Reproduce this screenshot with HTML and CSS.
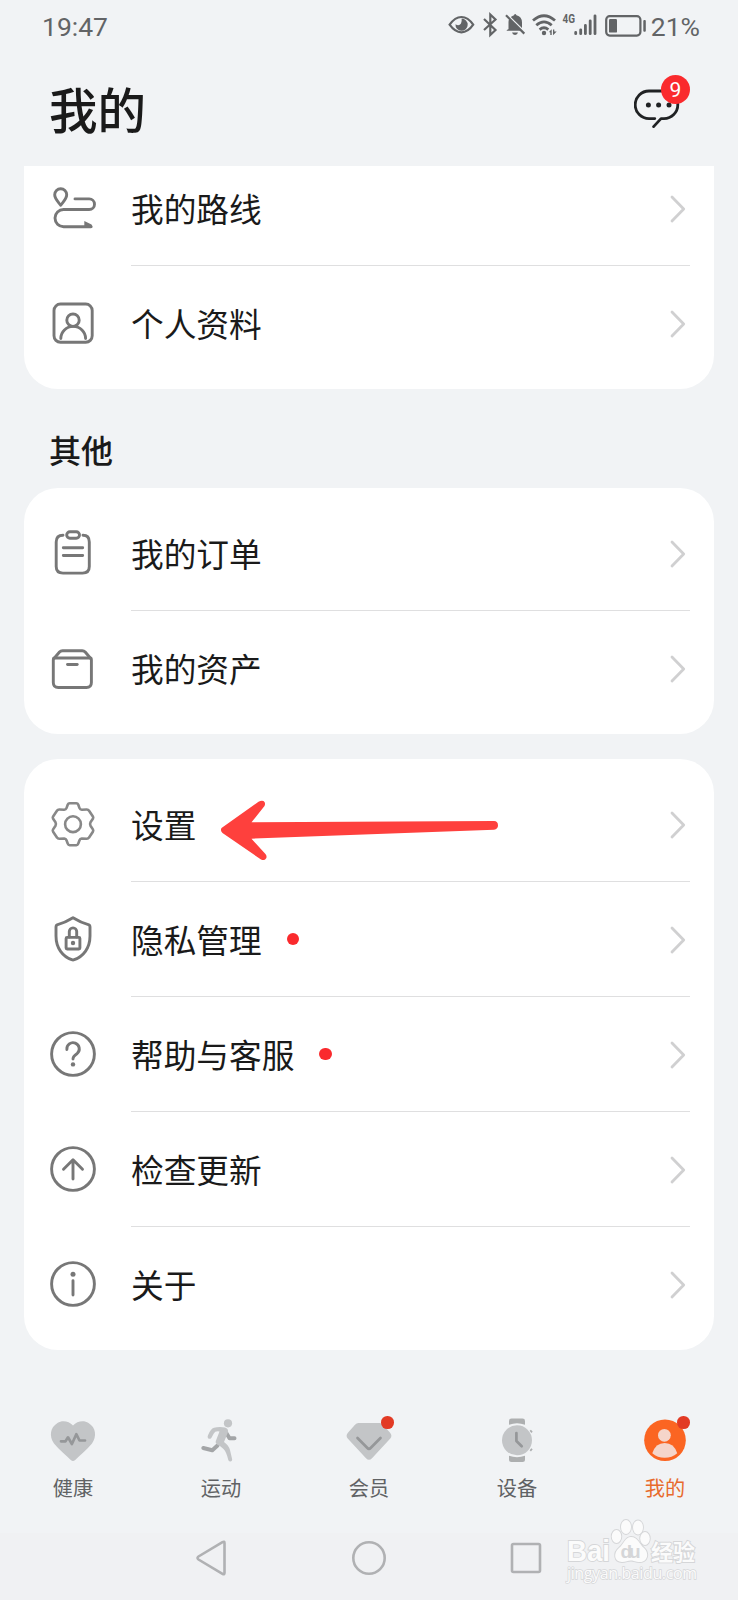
FILE: index.html
```
<!DOCTYPE html>
<html lang="zh-CN">
<head>
	<meta charset="utf-8">
	<link rel="stylesheet" href="styles.css">
	<title>我的</title>
</head>
<body>
	<svg class="defs">
		<symbol id="chevron" viewBox="0 0 16 28"><path d="M2 2 L13.7 14 L2 26"/></symbol>
	</svg>

	<div class="status">
		<span>19:47</span>
		<div class="status-right">
			<svg class="status-icons" viewBox="0 0 204 30">
				<!-- eye -->
				<path class="line" d="M3.6 14.7 Q9 7 15.4 7 Q22 7 27.2 14.7 Q22 22.3 15.4 22.3 Q9 22.3 3.6 14.7 Z"/>
				<path d="M15.6 8.6 A6.1 6.1 0 1 1 9.5 14.2 Q13 16.5 15 13.5 Q16 11 15.6 8.6 Z"/>
				<!-- bluetooth -->
				<path class="line" d="M38 9 L49.5 20 L44.3 25 V4.5 L49.5 9.5 L38 20"/>
				<!-- bell off -->
				<path d="M62.5 20 L62.5 12 Q62.5 10 63.3 9 L75 20.8 H60.5 Q60.5 20 62.5 19 Z"/>
				<path d="M64.8 7 Q66.5 5.6 68 5.2 Q69 3 70.5 5.2 Q76 6.5 76 12.5 V18 Z"/>
				<path d="M66 22.6 H72 Q71.5 25 69 25 Q66.5 25 66 22.6 Z"/>
				<path class="line" d="M60 5.2 L78.3 23.6"/>
				<!-- wifi -->
				<path class="wifi" d="M87 10.5 Q98 1 109 10.5 M90.3 15.2 Q98 8.5 105.7 15.2 M93.6 19.6 Q98 16 102.3 19.6"/>
				<circle cx="98" cy="23" r="2.2"/>
				<path d="M103 22 L105.7 19.3 V25 H104.3 V22.6 Z M107 19.6 H108.3 V21.6 H110.7 L107 25.3 Z"/>
				<text x="116.5" y="13.3" textLength="12.5" lengthAdjust="spacingAndGlyphs">4G</text>
				<!-- signal -->
				<path class="bars" d="M129.7 22.5 V23.7 M134.7 19.8 V23.7 M139.4 15.5 V23.7 M144.2 10.8 V23.7 M149 5.8 V23.7"/>
				<!-- battery -->
				<rect class="line" x="160.2" y="6.2" width="34.2" height="19.4" rx="3.5"/>
				<rect x="163" y="9" width="8" height="13.6" rx="1.2"/>
				<rect x="197.3" y="10" width="2.5" height="11.8" rx="1"/>
			</svg>
			<span>21%</span>
		</div>
	</div>

	<div class="header">
		<h1>我的</h1>
		<div class="message">
			<svg viewBox="0 0 48 42">
				<path d="M20.8 30.6 H15 A13.8 13.8 0 0 1 15 3 H30 A13.8 13.8 0 0 1 30 30.6 H27 L19.6 38.6"/>
				<circle cx="14.4" cy="17" r="2.5"/><circle cx="24.6" cy="17" r="2.5"/><circle cx="35" cy="17" r="2.5"/>
			</svg>
			<span class="badge">9</span>
		</div>
	</div>

	<div class="card cut">
		<div class="row">
			<svg class="icon" viewBox="0 0 48 48">
				<path d="M11.7 21.3 C9.5 18 5.7 15 5.7 10.8 A6 6 0 0 1 17.7 10.8 C17.7 15 13.9 18 11.7 21.3 Z"/>
				<path d="M26 14.9 H40.2 A5.3 5.3 0 0 1 40.2 25.5 H14.6 A8.6 8.6 0 0 0 14.6 42.7 H42"/>
				<path class="solid" d="M35.3 37 L42.5 40.5 Q44.5 44 42 44 H35.3 Z"/>
			</svg>
			<div class="body"><span>我的路线</span><svg class="chevron"><use href="#chevron"/></svg></div>
		</div>
		<div class="row">
			<svg class="icon" viewBox="0 0 48 48">
				<rect x="5" y="5" width="38.2" height="38.3" rx="6.5"/>
				<circle cx="24" cy="21.2" r="6.2"/>
				<path d="M11.8 39.5 A12.3 12 0 0 1 36.6 39.5"/>
			</svg>
			<div class="body"><span>个人资料</span><svg class="chevron"><use href="#chevron"/></svg></div>
		</div>
	</div>

	<h2>其他</h2>

	<div class="card">
		<div class="row">
			<svg class="icon" viewBox="0 0 48 48">
				<path d="M14 6.2 Q7.2 6.2 7.2 13 V37.5 Q7.2 44.1 14 44.1 H33.5 Q40.3 44.1 40.3 37.5 V13 Q40.3 6.2 34 6.2"/>
				<rect x="17.7" y="2.8" width="12.8" height="6.4" rx="3.2"/>
				<path d="M14.3 18.8 H33.7 M14.3 26.5 H33.7"/>
			</svg>
			<div class="body"><span>我的订单</span><svg class="chevron"><use href="#chevron"/></svg></div>
		</div>
		<div class="row">
			<svg class="icon" viewBox="0 0 48 48">
				<path d="M4.3 16 Q4.3 14 5.5 14 H41.2 Q42.4 14 42.4 16 V38.5 Q42.4 43.5 37.4 43.5 H9.3 Q4.3 43.5 4.3 38.5 Z"/>
				<path d="M5.2 14.3 L10.5 8 Q11.7 6.7 13.5 6.7 H33.3 Q35 6.7 36.2 8 L41.5 14.3"/>
				<path d="M18.5 20.5 H28.2"/>
			</svg>
			<div class="body"><span>我的资产</span><svg class="chevron"><use href="#chevron"/></svg></div>
		</div>
	</div>

	<div class="card">
		<div class="row">
			<svg class="icon gear" viewBox="0 0 48 48">
				<path d="M20.600 3.300 H27.400 Q28.700 3.300 29.200 4.500 L30.500 8.100 Q31.100 9.700 32.800 9.800 L37.600 9.500 Q39.200 9.400 39.900 10.500 L43.900 16.400 Q44.600 17.600 43.900 18.800 L41.500 22.300 Q40.600 24 41.500 25.700 L43.900 29.400 Q44.600 30.600 43.900 31.700 L39.900 37.700 Q39.200 38.900 37.600 38.800 L32.800 38.500 Q31.100 38.700 30.500 40.300 L29.200 43.700 Q28.700 45.200 27.400 45.200 H20.600 Q19.300 45.200 18.800 43.700 L17.500 40.300 Q16.900 38.700 15.200 38.500 L10.400 38.800 Q8.800 38.900 8.100 37.700 L4.100 31.700 Q3.400 30.600 4.100 29.400 L6.500 25.700 Q7.400 24 6.500 22.300 L4.100 18.800 Q3.400 17.600 4.100 16.400 L8.100 10.500 Q8.800 9.400 10.400 9.500 L15.200 9.800 Q16.900 9.700 17.500 8.100 L18.800 4.500 Q19.300 3.300 20.600 3.300 Z"/>
				<circle cx="24" cy="24.200" r="7.900"/>
			</svg>
			<div class="body"><span>设置</span><svg class="chevron"><use href="#chevron"/></svg></div>
			<svg class="arrow" viewBox="0 0 280 62">
				<path d="M1.5 28 Q0 30.5 2.5 33 L41 59.5 Q44.5 61 46 58.5 Q47.5 56 45 53.5 L31.5 38.7 L274 29.800 Q278 29 278 25.500 Q278 21 274 21 L31.5 22.3 L44.5 6 Q46 2.5 43.5 1 Q41.5 0 38.5 1.7 Z"/>
			</svg>
		</div>
		<div class="row">
			<svg class="icon" viewBox="0 0 48 48">
				<path d="M24 2.8 C29.5 6.2 34.5 8.4 39.3 9.6 Q41 10.1 41 12 V21 C41 33.5 34 41.5 25.3 44.7 Q24 45.2 22.7 44.7 C14 41.5 7 33.5 7 21 V12 Q7 10.1 8.7 9.6 C13.5 8.4 18.5 6.2 24 2.8 Z"/>
				<rect x="17.1" y="22.4" width="13.8" height="11.6" rx="1"/>
				<path d="M20.3 22 V16.6 A3.7 3.7 0 0 1 27.7 16.6 V22"/>
				<circle class="solid" cx="24" cy="28" r="2.2"/>
			</svg>
			<div class="body"><span>隐私管理</span><i class="dot"></i><svg class="chevron"><use href="#chevron"/></svg></div>
		</div>
		<div class="row">
			<svg class="icon" viewBox="0 0 48 48">
				<circle cx="24" cy="24" r="21.4"/>
				<path d="M17.9 19.5 A6.2 6.2 0 1 1 28.2 23.5 C25.5 25.3 24 26.5 24 29"/>
				<circle class="solid" cx="24" cy="34.4" r="2.2"/>
			</svg>
			<div class="body"><span>帮助与客服</span><i class="dot"></i><svg class="chevron"><use href="#chevron"/></svg></div>
		</div>
		<div class="row">
			<svg class="icon" viewBox="0 0 48 48">
				<circle cx="24" cy="24" r="21.4"/>
				<path d="M24 34 V15 M14.5 24.3 L24 14.8 L33.5 24.3"/>
			</svg>
			<div class="body"><span>检查更新</span><svg class="chevron"><use href="#chevron"/></svg></div>
		</div>
		<div class="row">
			<svg class="icon" viewBox="0 0 48 48">
				<circle cx="24" cy="24" r="21.4"/>
				<path d="M24 20.8 V35"/>
				<circle class="solid" cx="24" cy="14.2" r="2.5"/>
			</svg>
			<div class="body"><span>关于</span><svg class="chevron"><use href="#chevron"/></svg></div>
		</div>
	</div>

	<div class="tabs">
		<div class="tab">
			<svg viewBox="0 0 48 48">
				<path class="light" d="M24 9.5 C28 5 35 4 39.5 7 C47 11.5 48 20.5 43 27.5 C38 34 31 39 26.2 44 Q24 46 21.8 44 C17 39 10 34 5 27.5 C0 20.5 1 11.5 8.5 7 C13 4 20 5 24 9.5 Z"/>
				<path class="dark-line" d="M12 25.3 H16.5 L19 21.3 L22.9 28 L27.3 18.2 L30.5 24.5 H36"/>
			</svg>
			<span>健康</span>
		</div>
		<div class="tab">
			<svg viewBox="0 0 48 48">
				<path class="dark-line limb" d="M20.5 29.5 L15.3 34.2 L6.3 32 M29 16.5 L32.5 22.2 L37.5 22.2"/>
				<circle class="light" cx="31" cy="7.3" r="4.1"/>
				<path class="light" d="M28 11.5 Q32.5 13 30.5 17.5 L27 26 Q31.5 29 33 34 L35.2 43.5 Q35 45.8 33 45.5 Q31.7 45.3 31.3 44 Q29.5 36 26.5 33 Q23 29.8 20.5 28.8 Q17.8 27 19 24.5 L22.5 15.5 Q18 14.8 16.8 17.5 L14.3 22 Q12.8 23.5 11.3 22.4 Q10 21 11 19.3 Q13.5 12.8 17 11.8 Q22 10.5 28 11.5 Z"/>
			</svg>
			<span>运动</span>
		</div>
		<div class="tab">
			<svg viewBox="0 0 48 48">
				<path class="light" d="M13.5 7 H34.5 Q36.5 7 38 8.8 L45.3 17 Q47.5 19.8 45.3 22.5 L27 42.2 Q24 45.5 21 42.2 L2.7 22.5 Q.5 19.8 2.7 17 L10 8.8 Q11.5 7 13.5 7 Z"/>
				<path class="dark-line" d="M12.5 22 L22.4 32 Q24 33.7 25.6 32 L35.5 22"/>
			</svg>
			<i class="dot"></i>
			<span>会员</span>
		</div>
		<div class="tab">
			<svg viewBox="0 0 48 48">
				<path class="mid" d="M16 8.8 V5 Q16 2.6 18.5 2.6 H29.5 Q32 2.6 32 5 V8.8 Q24 5.8 16 8.8 Z M16 39.8 V43.5 Q16 46 18.5 46 H29.5 Q32 46 32 43.5 V39.8 Q24 42.5 16 39.8 Z"/>
				<circle class="light" cx="24" cy="24.3" r="15"/>
				<path class="dark-line" d="M23.4 17 V25 L28.7 30.3"/>
				<path class="crown" d="M37.3 14.3 L39 16.4 M37.3 34.9 L39 32.8"/>
			</svg>
			<span>设备</span>
		</div>
		<div class="tab active">
			<svg viewBox="0 0 48 48">
				<circle class="face" cx="24" cy="24.3" r="20.8"/>
				<circle class="skin" cx="23.4" cy="19.3" r="6.4"/>
				<path class="skin" d="M11.3 37.3 Q14.5 27 23.7 27 Q33 27 36.2 37.3 Q31 41.8 23.7 41.8 Q16.5 41.8 11.3 37.3 Z"/>
			</svg>
			<i class="dot"></i>
			<span>我的</span>
		</div>
	</div>

	<div class="nav">
		<svg viewBox="0 0 36 36"><path d="M30.5 3 V33 Q30.5 35 28.5 33.8 L4.5 19.5 Q2.5 18 4.5 16.5 L28.5 2.2 Q30.5 1 30.5 3 Z"/></svg>
		<svg viewBox="0 0 36 36"><circle cx="18" cy="18" r="15.7"/></svg>
		<svg viewBox="0 0 36 36"><rect x="4" y="4" width="28" height="28" rx="1.5"/></svg>
	</div>

	<svg class="watermark" viewBox="0 0 140 66">
		<text class="bai" x="2" y="42.500" textLength="43" lengthAdjust="spacingAndGlyphs">Bai</text>
		<ellipse cx="51.5" cy="18.500" rx="4.8" ry="6.5"/><ellipse cx="61" cy="9" rx="5" ry="7"/><ellipse cx="73" cy="9.500" rx="5" ry="7"/><ellipse cx="80" cy="20.500" rx="4.8" ry="6.5"/>
		<path d="M66 19 C73 19 74 26 79 30 C85 36 82 44 75 44 C70 44 69 42.5 66 42.5 C63 42.5 61 44 57 44 C49 44 48 35 54 30 C59 26 60 19 66 19 Z"/>
		<text class="du" x="55.5" y="39.500" textLength="20">du</text>
		<text class="jy" x="86" y="41.500" textLength="44">经验</text>
		<text class="url" x="2" y="60.500" textLength="130">jingyan.baidu.com</text>
	</svg>
</body>
</html>
```
FILE: styles.css
```
body {
	position: relative;
	margin: 0;
	width: 738px;
	height: 1600px;
	overflow: hidden;
	background-color: #f1f3f5;
	color: #1a1a1a;
	font-family: "Noto Sans CJK SC", sans-serif
}

svg {
	display: block;
	flex: none
}

.defs {
	position: absolute;
	width: 0;
	height: 0
}

.status {
	display: flex;
	justify-content: space-between;
	height: 54px;
	padding: 0 38px 0 42px;
	color: #626466;
	font: 26.5px/54px Roboto, sans-serif
}

.status-right {
	display: flex
}

.status-icons {
	width: 204px;
	height: 30px;
	margin: 10px 1px 0 0;
	fill: #626466
}

.status-icons .line {
	fill: none;
	stroke: #626466;
	stroke-width: 2.2
}

.wifi {
	fill: none;
	stroke: #626466;
	stroke-width: 2.8
}

.bars {
	stroke: #626466;
	stroke-width: 2.8;
	stroke-linecap: round
}

.status-icons text {
	font: bold 13px Roboto, sans-serif
}

.header {
	display: flex;
	justify-content: space-between;
	height: 112px;
	padding: 0 48px 0 49px
}

h1 {
	margin: 0;
	font-size: 48.5px;
	font-weight: 500;
	line-height: 108px
}

.message {
	position: relative;
	width: 56px;
	padding-top: 34px
}

.message svg {
	width: 48px;
	height: 42px;
	fill: #202224
}

.message path {
	fill: none;
	stroke: #202224;
	stroke-width: 2.8;
	stroke-linecap: round;
	stroke-linejoin: round
}

.badge {
	position: absolute;
	top: 21px;
	right: 0;
	width: 29px;
	height: 29px;
	border-radius: 50%;
	background-color: #fa2a2d;
	color: #fff;
	font: 21px/30px Roboto, sans-serif;
	text-align: center
}

.card {
	margin: 0 24px 25px;
	padding: 8px 0;
	border-radius: 34px;
	background-color: #fff
}

.cut {
	margin-bottom: 0;
	padding-top: 0;
	border-radius: 0 0 34px 34px
}

.row {
	position: relative;
	display: flex;
	align-items: center;
	height: 115px;
	padding: 0 24px 0 25px
}

.cut .row:first-child {
	height: 100px
}

.cut .row:first-child .icon {
	margin-bottom: 16px
}

.cut .row:first-child .body {
	height: 85px;
	padding-bottom: 14px
}

.icon {
	width: 48px;
	height: 48px;
	margin: 0 34px 1px 0;
	fill: none;
	stroke: #777;
	stroke-width: 2.9;
	stroke-linecap: round;
	stroke-linejoin: round
}

.gear {
	stroke: #888;
	stroke-width: 2.6
}

.solid {
	fill: #777;
	stroke: none
}

.body {
	display: flex;
	flex: 1;
	align-items: center;
	height: 114px;
	border-bottom: 1px solid #dfdfe0;
	font-size: 32.7px
}

.body span {
	margin-bottom: 2px
}

.row:last-child .body {
	border-color: transparent
}

.chevron {
	width: 16px;
	height: 28px;
	margin: 1px 4px 0 auto;
	fill: none;
	stroke: #d0d0d1;
	stroke-width: 2.8;
	stroke-linecap: round;
	stroke-linejoin: round
}

.dot {
	width: 12.6px;
	height: 12.6px;
	border-radius: 50%;
	background-color: #fa2a2d
}

.body .dot {
	margin-left: 24.8px
}

.arrow {
	position: absolute;
	left: 196px;
	top: 33px;
	width: 280px;
	height: 62px;
	fill: #fe403d
}

h2 {
	height: 99px;
	margin: 0;
	padding-left: 49px;
	font-size: 32px;
	font-weight: 500;
	line-height: 121px
}

.tabs {
	display: flex;
	height: 117px;
	margin: 0 -1px;
	padding-top: 41px
}

.tab {
	position: relative;
	flex: 1;
	color: #606264;
	font-size: 20.2px;
	line-height: 30px;
	text-align: center
}

.tab svg {
	width: 48px;
	height: 48px;
	margin: 0 auto 9px
}

.tab .dot {
	position: absolute;
	left: 86px;
	top: 0;
	background-color: #e23a24
}

.active {
	color: #e86a2c
}

.light {
	fill: #c3c5c7
}

.mid {
	fill: #adafb0
}

.dark-line {
	fill: none;
	stroke: #959799;
	stroke-width: 2.7;
	stroke-linecap: round;
	stroke-linejoin: round
}

.limb {
	stroke: #a3a5a7;
	stroke-width: 4
}

.crown {
	stroke: #adafb0;
	stroke-width: 1.8
}

.face {
	fill: #fb6522
}

.skin {
	fill: #f5d5ca
}

.nav {
	display: flex;
	justify-content: center;
	gap: 121px;
	height: 67px;
	padding-top: 7px;
	box-sizing: border-box;
	background-color: #f0f1f3
}

.nav svg {
	width: 36px;
	height: 36px;
	fill: none;
	stroke: #b0b1b3;
	stroke-width: 2.6
}

.watermark {
	position: absolute;
	left: 565px;
	top: 1518px;
	width: 140px;
	height: 66px;
	fill: #fbfbfb;
	stroke: #d5d6d8;
	stroke-width: 1.8;
	paint-order: stroke
}

.watermark .bai {
	font: bold 29px "Liberation Sans", sans-serif
}

.watermark .du {
	fill: #d5d6d8;
	stroke: none;
	font: bold 19px "Liberation Sans", sans-serif
}

.watermark .jy {
	font: bold 22px "Noto Sans CJK SC", sans-serif
}

.watermark .url {
	stroke-width: 1.4;
	font: 16px "Open Sans", sans-serif
}
```
